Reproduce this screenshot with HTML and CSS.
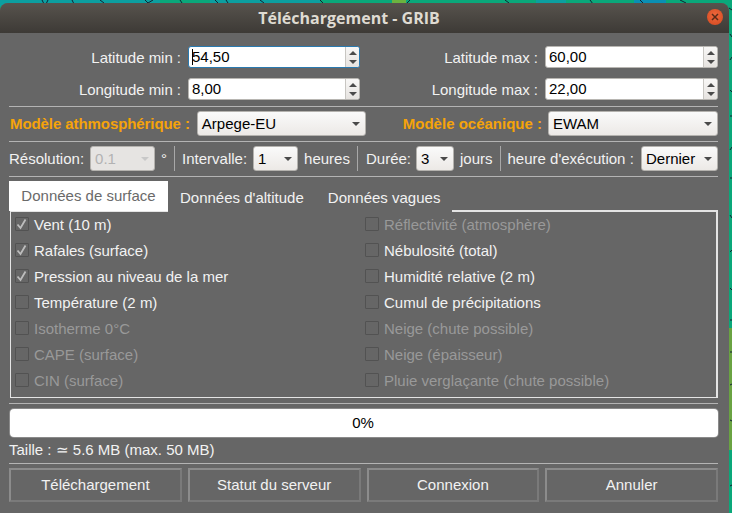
FILE: index.html
```html
<!DOCTYPE html>
<html lang="fr">
<head>
<meta charset="utf-8">
<title>Téléchargement - GRIB</title>
<link rel="stylesheet" href="styles.css">
</head>
<body>
<svg class="map" width="732" height="513" viewBox="0 0 732 513">
  <rect width="732" height="513" fill="#0aa87a"/>
  <rect x="0" width="160" height="6" fill="#0c9fa0"/>
  <rect x="210" width="110" height="6" fill="#0c9fa0"/>
  <rect x="392" width="14" height="6" fill="#6cb33f"/>
  <rect x="536" width="30" height="6" fill="#0c9fa0"/>
  <rect x="634" width="32" height="6" fill="#0a8fb4"/>
  <rect x="729" y="328" width="3" height="122" fill="#6aa342"/>
  <path d="M42 0l2 4M48 0l-2 4M72 0l2 4M100 0l4 3M145 0l3 3l5 -3M180 0l2 3M215 0l3 3M226 0l2 3M260 0l4 3M320 0l3 3M410 0l-3 3M505 0l4 3M590 0l3 4M640 0l3 3M680 0l6 3M729 8l3 2M730 34l2 3M730 60l2 -3M730 90l2 2M730 116h2M730 150l2 -3M730 178h2M730 215l2 3M730 252l2 -2M730 288l2 2M730 320h2M730 352h2M730 385l2 -1M730 420l2 1M730 486l2 -1" stroke="#123" stroke-width="1" fill="none"/>
</svg>
<main class="window">
  <header class="titlebar">
    <h1 class="title">Téléchargement - GRIB</h1>
    <span class="close"><svg width="10" height="10" viewBox="0 0 10 10"><path d="M2 2l6 6M8 2l-6 6" stroke="#5a2a18" stroke-width="1.5"/></svg></span>
  </header>
  <div class="content">
    <section class="coords">
      <label class="field">Latitude min :<span class="spin focus"><span class="value"><i class="caret"></i>54,50</span><span class="arrows"><b class="up"></b><b class="down"></b></span></span></label>
      <label class="field">Latitude max :<span class="spin"><span class="value">60,00</span><span class="arrows"><b class="up"></b><b class="down"></b></span></span></label>
      <label class="field">Longitude min :<span class="spin"><span class="value">8,00</span><span class="arrows"><b class="up"></b><b class="down"></b></span></span></label>
      <label class="field">Longitude max :<span class="spin"><span class="value">22,00</span><span class="arrows"><b class="up"></b><b class="down"></b></span></span></label>
    </section>
    <hr class="rule rule-a">
    <section class="models">
      <strong class="model">Modèle athmosphérique :</strong>
      <span class="combo combo-atm">Arpege-EU<b class="caret-down"></b></span>
      <strong class="model model-oce">Modèle océanique :</strong>
      <span class="combo combo-oce">EWAM<b class="caret-down"></b></span>
    </section>
    <hr class="rule rule-b">
    <section class="options">
      <span>Résolution:</span>
      <span class="combo combo-res disabled">0.1<b class="caret-down"></b></span>
      <span class="deg">°</span>
      <i class="vsep"></i>
      <span>Intervalle:</span>
      <span class="combo combo-int">1<b class="caret-down"></b></span>
      <span>heures</span>
      <i class="vsep"></i>
      <span>Durée:</span>
      <span class="combo combo-dur">3<b class="caret-down"></b></span>
      <span>jours</span>
      <i class="vsep"></i>
      <span>heure d'exécution :</span>
      <span class="combo combo-run">Dernier<b class="caret-down"></b></span>
    </section>
    <hr class="rule rule-c">
    <nav class="tabs">
      <span class="tab active">Données de surface</span>
      <span class="tab">Données d'altitude</span>
      <span class="tab">Données vagues</span>
    </nav>
    <section class="panel">
      <span class="check on"><i class="box"><svg width="12" height="12" viewBox="0 0 12 12"><path d="M1.5 6.5l3 3.5l5-8.5" stroke="#bdbdbd" stroke-width="1.8" fill="none"/></svg></i>Vent (10 m)</span>
      <span class="check off"><i class="box"></i>Réflectivité (atmosphère)</span>
      <span class="check on"><i class="box"><svg width="12" height="12" viewBox="0 0 12 12"><path d="M1.5 6.5l3 3.5l5-8.5" stroke="#bdbdbd" stroke-width="1.8" fill="none"/></svg></i>Rafales (surface)</span>
      <span class="check"><i class="box"></i>Nébulosité (total)</span>
      <span class="check on"><i class="box"><svg width="12" height="12" viewBox="0 0 12 12"><path d="M1.5 6.5l3 3.5l5-8.5" stroke="#bdbdbd" stroke-width="1.8" fill="none"/></svg></i>Pression au niveau de la mer</span>
      <span class="check"><i class="box"></i>Humidité relative (2 m)</span>
      <span class="check"><i class="box"></i>Température (2 m)</span>
      <span class="check"><i class="box"></i>Cumul de précipitations</span>
      <span class="check off"><i class="box"></i>Isotherme 0°C</span>
      <span class="check off"><i class="box"></i>Neige (chute possible)</span>
      <span class="check off"><i class="box"></i>CAPE (surface)</span>
      <span class="check off"><i class="box"></i>Neige (épaisseur)</span>
      <span class="check off"><i class="box"></i>CIN (surface)</span>
      <span class="check off"><i class="box"></i>Pluie verglaçante (chute possible)</span>
    </section>
    <hr class="rule rule-d">
    <div class="progress">0%</div>
    <p class="size">Taille : ≃ 5.6 MB (max. 50 MB)</p>
    <hr class="rule">
    <footer class="buttons">
      <button class="btn">Téléchargement</button>
      <button class="btn">Statut du serveur</button>
      <button class="btn">Connexion</button>
      <button class="btn">Annuler</button>
    </footer>
  </div>
</main>
</body>
</html>
```
FILE: styles.css
```css
* { box-sizing: border-box; }
html, body { margin: 0; height: 513px; overflow: hidden; }
body {
  position: relative;
  font-family: "Liberation Sans", Arial, sans-serif;
  font-size: 15px;
  color: #f2f2f2;
  padding-top: 3px;
}
.map { position: absolute; left: 0; top: 0; }
.window {
  position: relative;
  width: 729px;
  height: 510px;
  background: #666666;
  border-radius: 8px 8px 0 0;
  overflow: hidden;
}
.titlebar {
  height: 30px;
  background: linear-gradient(#57534d, #3d3a36);
  display: flex;
  align-items: center;
  justify-content: center;
  padding-right: 31px;
  position: relative;
}
.title {
  margin: 0;
  font-family: "Open Sans", "Liberation Sans", sans-serif;
  font-size: 16px;
  font-weight: 700;
  color: #dfdbd2;
}
.close {
  position: absolute;
  left: 707px;
  top: 6px;
  width: 16px;
  height: 16px;
  border-radius: 50%;
  background: radial-gradient(circle at 50% 40%, #f0683c, #d2481f);
  display: flex;
  align-items: center;
  justify-content: center;
}
.content { padding: 13px 11px 0 9px; display: flex; flex-direction: column; }
.coords {
  display: grid;
  grid-template-columns: 351px 358px;
  row-gap: 10px;
}
.field { display: flex; align-items: center; justify-content: flex-end; gap: 7px; letter-spacing: -0.03px; }
.spin {
  width: 172px;
  height: 22px;
  background: #fff;
  border: 1px solid #b8b6b2;
  border-radius: 3px;
  display: flex;
  color: #000;
  letter-spacing: 0;
}
.coords .field:nth-child(even) .spin { width: 173px; }
.spin.focus { border-color: #2a7ab0; }
.value { flex: 1; padding-left: 3px; line-height: 20px; position: relative; }
.caret { position: absolute; left: 3px; top: 2px; width: 1px; height: 16px; background: #000; }
.arrows {
  width: 14px;
  border-left: 1px solid #c8c6c2;
  background: linear-gradient(#f8f7f6, #e6e3e0);
  display: flex;
  flex-direction: column;
  align-items: center;
  justify-content: center;
  gap: 5px;
  border-radius: 0 2px 2px 0;
}
.up, .down { width: 0; height: 0; border-left: 4.5px solid transparent; border-right: 4.5px solid transparent; }
.up { border-bottom: 4px solid #4a4a4a; }
.down { border-top: 4px solid #4a4a4a; }
.rule { border: 0; height: 1px; margin: 0; background: #b4b4b4; flex: none; }
.rule-a { margin-top: 6px; }
.rule-b { margin-top: 5px; }
.rule-c { margin-top: 5px; }
.rule-d { margin-top: 5px; }
.models { display: flex; align-items: center; height: 25px; margin-top: 4px; }
.model { color: #f5a30a; font-weight: 700; padding-left: 1px; letter-spacing: -0.08px; }
.model-oce { margin-left: auto; letter-spacing: 0; }
.combo {
  height: 25px;
  background: linear-gradient(#fafafa, #ece9e6);
  border: 1px solid #b4b2ae;
  border-radius: 3px;
  color: #000;
  display: flex;
  align-items: center;
  padding-left: 4px;
  position: relative;
  flex: none;
}
.caret-down {
  position: absolute;
  right: 5px;
  top: 10px;
  width: 0;
  height: 0;
  border-left: 4px solid transparent;
  border-right: 4px solid transparent;
  border-top: 4px solid #4a4a4a;
}
.combo-atm { width: 169px; margin-left: 7px; }
.combo-oce { width: 170px; margin-left: 6px; }
.options { display: flex; align-items: center; height: 25px; margin-top: 4px; }
.combo-res { width: 65px; margin-left: 6px; }
.combo.disabled { color: #b2b2b2; background: #e6e4e2; }
.combo.disabled .caret-down { border-top-color: #c8c8c8; }
.deg { margin-left: 6px; }
.vsep { width: 1px; height: 25px; background: #a8a8a8; flex: none; }
.deg + .vsep { margin: 0 7px; }
.combo-int { width: 45px; margin: 0 6px; }
.combo-int + span + .vsep { margin: 0 8px 0 7px; }
.combo-dur { width: 38px; margin: 0 6px 0 5px; }
.combo-dur + span + .vsep { margin: 0 7px; }
.combo-run { width: 77px; margin-left: auto; }
.tabs { display: flex; height: 30px; margin-top: 4px; align-items: stretch; position: relative; z-index: 1; }
.tab { padding: 2px 12px 0; display: flex; align-items: center; background: #666; height: 31px; }
.tab.active { background: #fff; color: #6a6a6a; width: 159px; justify-content: center; padding: 0 0 2px; height: 30px; }
.panel {
  width: 708px;
  height: 188px;
  margin: -1px 0 0 1px;
  border: 2px solid #e4e4e4;
  border-width: 2px 2px 1px 1px;
  display: grid;
  grid-template-columns: 350px 1fr;
  grid-auto-rows: 26px;
  padding: 0 0 0 4px;
}
.check { display: flex; align-items: center; gap: 5px; padding-bottom: 2px; }
.check.off { color: #999; }
.box { width: 14px; height: 14px; border: 1px solid #525252; background: #666; border-radius: 1px; flex: none; display: flex; align-items: center; justify-content: center; }
.progress {
  height: 28px;
  margin: 5px 0 0 1px;
  padding-right: 2px;
  background: #fff;
  color: #000;
  border-radius: 4px;
  box-shadow: 0 0 0 1px #8a8a8a;
  text-align: center;
  line-height: 28px;
}
.size { margin: 0; height: 26px; line-height: 26px; }
.buttons { display: flex; gap: 6px; margin-top: 4px; }
.btn {
  flex: 1;
  height: 34px;
  background: #666;
  border: 2px solid #8c8c8c;
  border-right-color: #7a7a7a;
  border-bottom-color: #7a7a7a;
  color: #f2f2f2;
  font: inherit;
  padding: 0 0 2px;
}
```
